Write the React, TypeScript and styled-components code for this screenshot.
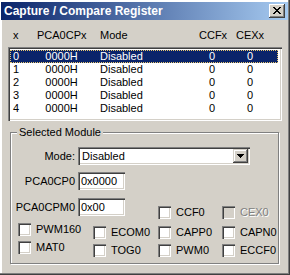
import React from 'react';
import styled, { createGlobalStyle } from 'styled-components';

const Global = createGlobalStyle`
  html, body { margin: 0; padding: 0; background: #D4D0C8; }
  body { font-family: "Liberation Sans", Arial, sans-serif; font-size: 11px; color: #000; }
`;

const sunken = `
  box-shadow: inset 1px 1px 0 #808080, inset 2px 2px 0 #404040,
    inset -1px -1px 0 #ffffff, inset -2px -2px 0 #D4D0C8;
`;

const raised = `
  box-shadow: inset -1px -1px 0 #404040, inset 1px 1px 0 #ffffff,
    inset -2px -2px 0 #808080;
`;

const Window = styled.div`
  box-sizing: border-box;
  width: 290px;
  height: 275px;
  background: #D4D0C8;
  padding: 2px 2px 2px 1px;
  box-shadow: inset -1px -1px 0 #404040, inset -2px -2px 0 #808080, inset 2px 2px 0 #ffffff;
  display: flex;
  flex-direction: column;
  align-items: flex-start;
`;

const TitleBar = styled.div`
  box-sizing: border-box;
  width: 100%;
  height: 18px;
  padding: 0 3px 0 3px;
  display: flex;
  align-items: center;
  justify-content: space-between;
  background: linear-gradient(to right, #0A246A, #A6CAF0);
`;

const Title = styled.span`
  color: #fff;
  font-weight: bold;
  font-size: 12px;
  line-height: 14px;
  white-space: nowrap;
`;

const CloseButton = styled.div`
  box-sizing: border-box;
  width: 16px;
  height: 14px;
  background: #D4D0C8;
  ${raised}
  display: flex;
  align-items: center;
  justify-content: center;
  padding-bottom: 1px;
`;

const Columns = styled.div`
  display: grid;
  grid-template-columns: 27px 49px 113px 26px 50px;
  height: 13px;
  line-height: 13px;
  white-space: nowrap;
`;

const HeaderRow = styled(Columns)`
  margin: 9px 0 0 9px;
`;

const Cell = styled.div<{ $center?: boolean; $pad?: number }>`
  text-align: ${(p) => (p.$center ? 'center' : 'left')};
  padding-left: ${(p) => p.$pad ?? 0}px;
`;

const ListBox = styled.div`
  box-sizing: border-box;
  margin: 5px 0 0 7px;
  width: 274px;
  height: 74px;
  background: #fff;
  ${sunken}
  padding: 3px 2px 2px 2px;
`;

const DataRow = styled(Columns)<{ $selected?: boolean }>`
  margin-right: 2px;
  box-sizing: border-box;
  background: ${(p) => (p.$selected ? '#0A246A' : 'transparent')};
  color: ${(p) => (p.$selected ? '#fff' : '#000')};
  outline: ${(p) => (p.$selected ? '1px dotted #E8C76E' : 'none')};
  outline-offset: -1px;
`;

const Group = styled.div`
  box-sizing: border-box;
  position: relative;
  margin: 11px 0 0 9px;
  width: 269px;
  height: 132px;
  border: 1px solid #808080;
  box-shadow: inset 1px 1px 0 #fff, 1px 1px 0 #fff;
  padding-top: 14px;
`;

const Legend = styled.span`
  position: absolute;
  top: -7px;
  left: 6px;
  padding: 0 2px;
  background: #D4D0C8;
  line-height: 13px;
`;

const FormRow = styled.div<{ $gap?: number }>`
  display: flex;
  align-items: center;
  margin-top: ${(p) => p.$gap ?? 0}px;
`;

const FieldLabel = styled.label`
  width: 64px;
  margin-right: 3px;
  text-align: right;
  white-space: nowrap;
`;

const Select = styled.div`
  box-sizing: border-box;
  width: 172px;
  height: 18px;
  background: #fff;
  ${sunken}
  display: flex;
  align-items: center;
  justify-content: space-between;
  padding: 2px 2px 2px 4px;
  line-height: 14px;
`;

const DropButton = styled.div`
  box-sizing: border-box;
  width: 15px;
  height: 14px;
  background: #D4D0C8;
  box-shadow: inset -1px -1px 0 #404040, inset 1px 1px 0 #D4D0C8,
    inset -2px -2px 0 #808080, inset 2px 2px 0 #ffffff;
  display: flex;
  align-items: center;
  justify-content: center;
`;

const TextBox = styled.div`
  box-sizing: border-box;
  width: 47px;
  height: 18px;
  background: #fff;
  ${sunken}
  padding: 2px 2px 2px 3px;
  line-height: 14px;
`;

const CheckGrid = styled.div`
  display: grid;
  grid-template-columns: 82px 65px 64px 1fr;
  grid-template-rows: 28px 18px 18px;
  margin-top: 8px;
`;

const SpanRow = styled(FormRow)`
  grid-column: 1 / span 2;
  grid-row: 1;
  align-self: start;
`;

const CheckItem = styled.div<{ $lead?: boolean; $first?: boolean; $col: number; $row: number }>`
  grid-column: ${(p) => p.$col};
  grid-row: ${(p) => p.$row};
  display: flex;
  align-items: center;
  height: 13px;
  align-self: start;
  margin-left: ${(p) => (p.$lead ? 7 : 0)}px;
  margin-top: ${(p) => (p.$first ? 8 : p.$lead ? -3 : 0)}px;
`;

const Box = styled.span<{ $disabled?: boolean }>`
  box-sizing: border-box;
  width: 13px;
  height: 13px;
  margin-right: 5px;
  background: ${(p) => (p.$disabled ? '#D4D0C8' : '#fff')};
  ${sunken}
`;

const CheckText = styled.span<{ $disabled?: boolean }>`
  line-height: 13px;
  white-space: nowrap;
  color: ${(p) => (p.$disabled ? '#808080' : '#000')};
  text-shadow: ${(p) => (p.$disabled ? '1px 1px 0 #fff' : 'none')};
`;

const CloseIcon = () => (
  <svg width="8" height="7" viewBox="0 0 8 7" shapeRendering="crispEdges">
    <path
      fill="#000"
      d="M0 0h2v1H0zM6 0h2v1H6zM1 1h2v1H1zM5 1h2v1H5zM2 2h4v1H2zM3 3h2v1H3zM2 4h4v1H2zM1 5h2v1H1zM5 5h2v1H5zM0 6h2v1H0zM6 6h2v1H6z"
    />
  </svg>
);

const DownArrow = () => (
  <svg width="7" height="4" viewBox="0 0 7 4" shapeRendering="crispEdges">
    <path fill="#000" d="M0 0h7v1H0zM1 1h5v1H1zM2 2h3v1H2zM3 3h1v1H3z" />
  </svg>
);

type Check = { label: string; lead?: boolean; first?: boolean; disabled?: boolean; col: number; row: number };

const checks: Check[] = [
  { label: 'CCF0', col: 3, row: 1, first: true },
  { label: 'CEX0', col: 4, row: 1, first: true, disabled: true },
  { label: 'PWM160', col: 1, row: 2, lead: true },
  { label: 'ECOM0', col: 2, row: 2 },
  { label: 'CAPP0', col: 3, row: 2 },
  { label: 'CAPN0', col: 4, row: 2 },
  { label: 'MAT0', col: 1, row: 3, lead: true },
  { label: 'TOG0', col: 2, row: 3 },
  { label: 'PWM0', col: 3, row: 3 },
  { label: 'ECCF0', col: 4, row: 3 },
];

export default function App() {
  const rows = [0, 1, 2, 3, 4];
  return (
    <>
      <Global />
      <Window>
        <TitleBar>
          <Title>Capture / Compare Register</Title>
          <CloseButton>
            <CloseIcon />
          </CloseButton>
        </TitleBar>
        <HeaderRow>
          <Cell $pad={3}>x</Cell>
          <Cell $center>PCA0CPx</Cell>
          <Cell $pad={14}>Mode</Cell>
          <Cell $center>CCFx</Cell>
          <Cell $center>CEXx</Cell>
        </HeaderRow>
        <ListBox>
          {rows.map((r) => (
            <DataRow key={r} $selected={r === 0}>
              <Cell $pad={3}>{r}</Cell>
              <Cell $center>0000H</Cell>
              <Cell $pad={14}>Disabled</Cell>
              <Cell $center>0</Cell>
              <Cell $center>0</Cell>
            </DataRow>
          ))}
        </ListBox>
        <Group>
          <Legend>Selected Module</Legend>
          <FormRow>
            <FieldLabel>Mode:</FieldLabel>
            <Select>
              <span>Disabled</span>
              <DropButton>
                <DownArrow />
              </DropButton>
            </Select>
          </FormRow>
          <FormRow $gap={7}>
            <FieldLabel>PCA0CP0</FieldLabel>
            <TextBox>0x0000</TextBox>
          </FormRow>
          <CheckGrid>
            <SpanRow>
              <FieldLabel>PCA0CPM0</FieldLabel>
              <TextBox>0x00</TextBox>
            </SpanRow>
            {checks.map((c) => (
              <CheckItem key={c.label} $lead={c.lead} $first={c.first} $col={c.col} $row={c.row}>
                <Box $disabled={c.disabled} />
                <CheckText $disabled={c.disabled}>{c.label}</CheckText>
              </CheckItem>
            ))}
          </CheckGrid>
        </Group>
      </Window>
    </>
  );
}
